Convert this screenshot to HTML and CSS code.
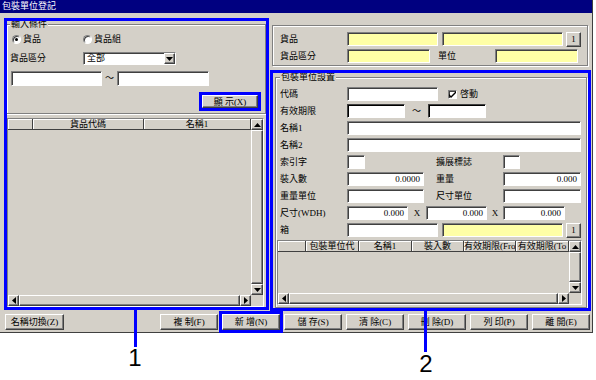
FILE: index.html
```html
<!DOCTYPE html>
<html lang="zh-Hant">
<head>
  <meta charset="UTF-8" />
  <title>包裝單位登記</title>
  <link rel="stylesheet" href="styles.css">
</head>
<body>

  <div class="window">
    <div class="titlebar">包裝單位登記</div>

    <div class="main">
      <!-- 輸入條件 + 貨品清單 -->
      <div class="left">
        <div class="group cond">
          <span class="legend">輸入條件</span>
          <div class="row radios">
            <span class="radio on"></span><span class="rlabel first">貨品</span>
            <span class="radio"></span><span class="rlabel">貨品組</span>
          </div>
          <div class="row sel-row">
            <span class="lbl w73">貨品區分</span>
            <div class="select">
              <span class="sel-text">全部</span>
              <span class="drop raised"><svg width="7" height="4" viewBox="0 0 7 4"><path d="M0 0h7L3.5 4z" fill="#000"/></svg></span>
            </div>
          </div>
          <div class="row range">
            <span class="field w91"></span><span class="tilde w15">～</span><span class="field w92"></span>
          </div>
          <div class="row act">
            <button class="btn show hl">顯 示(X)</button>
          </div>
        </div>

        <div class="grid lgrid">
          <div class="gmain">
            <div class="ghead">
              <span></span><span>貨品代碼</span><span>名稱1</span>
            </div>
          </div>
          <div class="vscroll">
            <span class="arr raised"><svg width="7" height="4" viewBox="0 0 7 4"><path d="M3.5 0L7 4H0z" fill="#000"/></svg></span>
            <span class="thumb raised"></span>
            <span class="arr raised"><svg width="7" height="4" viewBox="0 0 7 4"><path d="M0 0h7L3.5 4z" fill="#000"/></svg></span>
          </div>
          <div class="hscroll">
            <span class="arr raised"><svg width="4" height="7" viewBox="0 0 4 7"><path d="M0 3.5L4 0v7z" fill="#000"/></svg></span>
            <span class="thumb raised"></span>
            <span class="arr raised"><svg width="4" height="7" viewBox="0 0 4 7"><path d="M0 0l4 3.5L0 7z" fill="#000"/></svg></span>
          </div>
          <div class="corner"></div>
        </div>
      </div>

      <!-- 貨品資料 + 包裝單位設置 -->
      <div class="right">
        <div class="panel">
          <div class="row">
            <span class="lbl w67">貨品</span>
            <span class="field yel w91"></span>
            <span class="field yel w121 ml4"></span>
            <button class="btn one ml3">1</button>
          </div>
          <div class="row">
            <span class="lbl w67">貨品區分</span>
            <span class="field yel w83"></span>
            <span class="lbl w57 ml8">單位</span>
            <span class="field yel w83"></span>
          </div>
        </div>

        <div class="group setting">
          <span class="legend">包裝單位設置</span>
          <div class="rows">
            <div class="row">
              <span class="lbl w67">代碼</span>
              <span class="field w91"></span>
              <span class="check"><svg width="7" height="7" viewBox="0 0 7 7"><path d="M0 3l2 2 5-5v2L2 7 0 5z" fill="#000"/></svg></span>
              <span class="lbl">啓動</span>
            </div>
            <div class="row">
              <span class="lbl w67">有效期限</span>
              <span class="field dark w58"></span>
              <span class="tilde w23">～</span>
              <span class="field dark w58"></span>
            </div>
            <div class="row">
              <span class="lbl w67">名稱1</span>
              <span class="field w234"></span>
            </div>
            <div class="row">
              <span class="lbl w67">名稱2</span>
              <span class="field w234"></span>
            </div>
            <div class="row">
              <span class="lbl w67">索引字</span>
              <span class="field w18"></span>
              <span class="lbl w67 ml71">擴展標誌</span>
              <span class="field w17"></span>
            </div>
            <div class="row">
              <span class="lbl w67">裝入數</span>
              <span class="field w77">0.0000</span>
              <span class="lbl w67 ml12">重量</span>
              <span class="field w78">0.000</span>
            </div>
            <div class="row">
              <span class="lbl w67">重量單位</span>
              <span class="field w77"></span>
              <span class="lbl w67 ml12">尺寸單位</span>
              <span class="field w78"></span>
            </div>
            <div class="row">
              <span class="lbl w67">尺寸(WDH)</span>
              <span class="field w61">0.000</span>
              <span class="times w18">X</span>
              <span class="field w61">0.000</span>
              <span class="times w16">X</span>
              <span class="field w62">0.000</span>
            </div>
            <div class="row">
              <span class="lbl w67">箱</span>
              <span class="field w91"></span>
              <span class="field yel w121 ml4"></span>
              <button class="btn one ml3">1</button>
            </div>
          </div>

          <div class="grid rgrid">
            <div class="gmain">
              <div class="ghead">
                <span></span><span>包裝單位代</span><span>名稱1</span><span>裝入數</span><span>有效期限(Fro</span><span>有效期限(To</span>
              </div>
            </div>
            <div class="vscroll">
              <span class="arr raised"><svg width="7" height="4" viewBox="0 0 7 4"><path d="M3.5 0L7 4H0z" fill="#000"/></svg></span>
              <span class="thumb raised"></span>
              <span class="arr raised"><svg width="7" height="4" viewBox="0 0 7 4"><path d="M0 0h7L3.5 4z" fill="#000"/></svg></span>
            </div>
            <div class="hscroll">
              <span class="arr raised"><svg width="4" height="7" viewBox="0 0 4 7"><path d="M0 3.5L4 0v7z" fill="#000"/></svg></span>
              <span class="thumb raised"></span>
              <span class="arr raised"><svg width="4" height="7" viewBox="0 0 4 7"><path d="M0 0l4 3.5L0 7z" fill="#000"/></svg></span>
            </div>
            <div class="corner"></div>
          </div>
        </div>
      </div>
    </div>

    <div class="buttons">
      <button class="btn wide">名稱切換(Z)</button>
      <span class="spacer"></span>
      <button class="btn">複 制(F)</button>
      <button class="btn hl">新 增(N)</button>
      <button class="btn">儲 存(S)</button>
      <button class="btn">清 除(C)</button>
      <button class="btn">刪 除(D)</button>
      <button class="btn">列 印(P)</button>
      <button class="btn">離 開(E)</button>
    </div>
  </div>

  <!-- 說明標示 -->
  <div class="mark box1"></div>
  <div class="mark box2"></div>
  <div class="lead l1"></div>
  <div class="lead l2"></div>
  <div class="num n1">1</div>
  <div class="num n2">2</div>

</body>
</html>
```

FILE: styles.css
```css
* {
  box-sizing: border-box;
}
body {
  margin: 0;
  position: relative;
  width: 596px;
  height: 380px;
  overflow: hidden;
  background: #ffffff;
  color: #000000;
  font: 9px/11px "Liberation Serif", "Noto Sans CJK TC", serif;
}
.window {
  width: 593px;
  height: 333px;
  background: #d4d0c8;
  border-right: 1px solid #404040;
  border-bottom: 1px solid #404040;
  display: flex;
  flex-direction: column;
}
.titlebar {
  height: 13px;
  line-height: 13px;
  padding-left: 2px;
  background: #000080;
  color: #ffffff;
}
.main {
  display: flex;
  height: 298px;
}
.left {
  width: 270px;
  padding-left: 6px;
  display: flex;
  flex-direction: column;
}
.right {
  width: 320px;
  display: flex;
  flex-direction: column;
}

/* 群組框 */
.group, .panel {
  border: 1px solid #808080;
  box-shadow: inset 1px 1px #ffffff, 1px 1px #ffffff;
}
.legend {
  display: block;
  width: max-content;
  margin: -6px 0 0 3px;
  padding: 0 1px;
  line-height: 10px;
  background: #d4d0c8;
}
.row {
  display: flex;
  align-items: center;
  height: 14px;
}
.lbl {
  white-space: nowrap;
}

.cond {
  width: 260px;
  height: 90px;
  margin-top: 11px;
}
.cond .radios {
  height: 11px;
  margin-top: 5px;
  padding-left: 5px;
}
.radio {
  width: 9px;
  height: 9px;
  border-radius: 50%;
  background: #ffffff;
  border: 1px solid #808080;
  border-right-color: #ffffff;
  border-bottom-color: #ffffff;
  box-shadow: inset 1px 1px #404040;
  display: flex;
  align-items: center;
  justify-content: center;
}
.radio.on::after {
  content: "";
  width: 3px;
  height: 3px;
  border-radius: 50%;
  background: #000000;
}
.rlabel {
  margin-left: 2px;
}
.rlabel.first {
  width: 60px;
}
.sel-row {
  height: 13px;
  margin-top: 7px;
  padding-left: 3px;
}
.select {
  width: 93px;
  height: 13px;
  display: flex;
  background: #ffffff;
  border: 1px solid;
  border-color: #808080 #ffffff #ffffff #808080;
  box-shadow: inset 1px 1px #404040;
}
.sel-text {
  flex: 1;
  padding-left: 3px;
  line-height: 11px;
}
.drop {
  width: 11px;
  display: flex;
  align-items: center;
  justify-content: center;
}
.range {
  height: 15px;
  margin-top: 6px;
  padding-left: 4px;
}
.range .field {
  height: 15px;
}
.act {
  height: 13px;
  margin-top: 9px;
  padding-right: 7px;
  justify-content: flex-end;
}
.tilde, .times {
  text-align: center;
}

/* 輸入欄 */
.field {
  display: block;
  height: 14px;
  padding: 0 3px;
  line-height: 12px;
  text-align: right;
  white-space: nowrap;
  background: #ffffff;
  border: 1px solid;
  border-color: #808080 #ffffff #ffffff #808080;
  box-shadow: inset 1px 1px #404040;
}
.field.dark {
  border-color: #404040 #ffffff #ffffff #404040;
  box-shadow: inset 1px 1px #000000;
}
.field.yel {
  background: #ffffa6;
}
.check {
  width: 9px;
  height: 9px;
  margin: 0 3px 0 10px;
  background: #ffffff;
  border: 1px solid;
  border-color: #808080 #ffffff #ffffff #808080;
  box-shadow: inset 1px 1px #404040;
  display: flex;
  align-items: center;
  justify-content: center;
}

/* 按鈕 */
.raised {
  background: #d4d0c8;
  border: 1px solid;
  border-color: #ffffff #404040 #404040 #ffffff;
  box-shadow: inset -1px -1px #808080;
}
.btn {
  width: 58px;
  height: 16px;
  padding: 0;
  font: inherit;
  color: #000000;
  background: #d4d0c8;
  border: 1px solid;
  border-color: #ffffff #404040 #404040 #ffffff;
  box-shadow: inset -1px -1px #808080;
  white-space: nowrap;
}
.btn.hl {
  outline: 3px solid #0000ff;
}
.btn.show {
  width: 56px;
  height: 13px;
  line-height: 10px;
}
.btn.one {
  width: 15px;
  height: 15px;
  flex: none;
}
.btn.wide {
  width: 59px;
}

/* 右上資料 */
.panel {
  width: 316px;
  height: 41px;
  margin: 12px 0 0 2px;
  padding: 6px 0 0 7px;
}
.panel .row + .row {
  margin-top: 3px;
}
.setting {
  width: 312px;
  height: 231px;
  margin: 11px 0 0 5px;
}
.setting .legend {
  margin-left: 4px;
}
.rows {
  display: flex;
  flex-direction: column;
  gap: 3px;
  margin-top: 5px;
  padding-left: 4px;
}

/* 表格 */
.grid {
  display: grid;
  grid-template-columns: 1fr 12px;
  grid-template-rows: 1fr 11px;
  border: 1px solid;
  border-color: #808080 #ffffff #ffffff #808080;
}
.lgrid {
  width: 257px;
  height: 189px;
  margin: 4px 0 0 1px;
}
.rgrid {
  width: 305px;
  height: 65px;
  margin: 3px 0 0 1px;
}
.ghead {
  display: grid;
  height: 11px;
}
.lgrid .ghead {
  grid-template-columns: 25px 111px 1fr;
}
.rgrid .ghead {
  grid-template-columns: 28px 53px 53px 52px 52px 1fr;
}
.ghead span {
  overflow: hidden;
  white-space: nowrap;
  text-align: center;
  line-height: 10px;
  border-right: 1px solid #404040;
  border-bottom: 1px solid #404040;
  box-shadow: inset 1px 1px #ffffff;
}
.vscroll {
  display: flex;
  flex-direction: column;
}
.hscroll {
  display: flex;
}
.arr {
  width: 12px;
  height: 11px;
  display: flex;
  align-items: center;
  justify-content: center;
  flex: none;
}
.hscroll .arr {
  width: 11px;
}
.thumb {
  flex: 1;
}

/* 寬度 */
.w15 { width: 15px; }
.w16 { width: 16px; }
.w17 { width: 17px; }
.w18 { width: 18px; }
.w23 { width: 23px; }
.w57 { width: 57px; }
.w58 { width: 58px; }
.w61 { width: 61px; }
.w62 { width: 62px; }
.w67 { width: 67px; }
.w73 { width: 73px; }
.w77 { width: 77px; }
.w78 { width: 78px; }
.w83 { width: 83px; }
.w91 { width: 91px; }
.w92 { width: 92px; }
.w121 { width: 121px; }
.w234 { width: 234px; }
.ml3 { margin-left: 3px; }
.ml4 { margin-left: 4px; }
.ml8 { margin-left: 8px; }
.ml12 { margin-left: 12px; }
.ml71 { margin-left: 71px; }

/* 底部按鈕列 */
.buttons {
  display: flex;
  gap: 4px;
  height: 16px;
  margin-top: 3px;
  padding: 0 2px 0 5px;
}
.spacer {
  flex: 1;
}

/* 說明標示 */
.mark {
  position: absolute;
  border: 3px solid #0000ff;
}
.box1 {
  left: 4px;
  top: 18px;
  width: 265px;
  height: 292px;
}
.box2 {
  left: 270px;
  top: 70px;
  width: 321px;
  height: 241px;
}
.lead {
  position: absolute;
  width: 3px;
  background: #0000ff;
}
.l1 {
  left: 134px;
  top: 310px;
  height: 37px;
}
.l2 {
  left: 424px;
  top: 311px;
  height: 41px;
}
.num {
  position: absolute;
  width: 20px;
  text-align: center;
  font: 24px/1 "Liberation Sans", sans-serif;
}
.n1 {
  left: 125px;
  top: 346px;
}
.n2 {
  left: 416px;
  top: 352px;
}
```
